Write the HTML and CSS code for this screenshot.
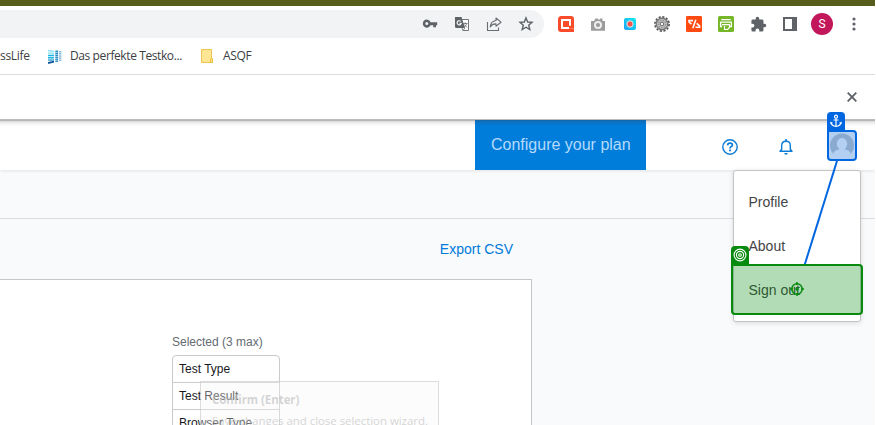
FILE: index.html
```html
<!DOCTYPE html>
<html lang="en">
<head>
<meta charset="utf-8">
<title>Configure your plan</title>
<link rel="stylesheet" href="styles.css">
</head>
<body>
<div class="window">
  <div class="titlebar"></div>
  <div class="toolbar">
    <div class="omnibox">
      <span class="cell"><svg width="16" height="16" viewBox="0 0 16 16"><path fill="#5f6368" fill-rule="evenodd" d="M4.800 3.600a4 4 0 0 1 3.800 2.600H15.200V9.300H14V11.300H11.200V9.300H8.500A4 4 0 1 1 4.800 3.600ZM4.800 6.100a1.500 1.500 0 1 0 0 3 1.500 1.500 0 0 0 0-3Z"/></svg></span>
      <span class="cell"><svg width="16" height="16" viewBox="0 0 16 16"><path d="M6.500 3.500H14.500V14.500H9" fill="#fff" stroke="#73777b"/><path d="M1 1H7.500L11 12H2.500Q1 12 1 10.500Z" fill="#5f6368"/><path d="M6.700 5.300A2.100 2.100 0 1 0 7.300 7.200H5.500" fill="none" stroke="#fff" stroke-width="1.100"/><path d="M9 7.500H13.500M11.300 6.300V7.500M12.800 7.500Q12 10 10 11.300M10.300 8.500L13 11.500M8 12L9 14.500L11 12" fill="none" stroke="#73777b" stroke-width=".9"/></svg></span>
      <span class="cell"><svg width="16" height="16" viewBox="0 0 16 16" fill="none" stroke="#6a6e73" stroke-width="1.100"><path d="M1.500 6V14.500H12.500V11.500"/><path d="M10 2L15 6.200L10 10.200V7.900Q6 7.700 4.200 11Q4.500 5.300 10 4.500Z" stroke-linejoin="round"/></svg></span>
      <span class="cell"><svg width="16" height="16" viewBox="0 0 16 16"><path d="M8 1.900L9.700 6L14 6.300L10.700 9.200L11.800 13.500L8 11.200L4.200 13.500L5.300 9.200L2 6.300L6.300 6Z" fill="none" stroke="#5f6368" stroke-width="1.400"/></svg></span>
    </div>
    <div class="extensions">
      <span class="cell"><svg width="16" height="16" viewBox="0 0 16 16"><path d="M16 14.500H3A1.500 1.500 0 0 1 1.500 13V3A1.500 1.500 0 0 1 3 1.500H13A1.500 1.500 0 0 1 14.500 3V11.200H11" fill="none" stroke="#fa4b2a" stroke-width="3"/><rect x="5" y="5" width="6" height="6" fill="#fa4b2a"/></svg></span>
      <span class="cell"><svg width="16" height="16" viewBox="0 0 16 16"><path d="M1 5H4L5.500 2.500H8V3.500H10V2.500H12.500V5H15V14.800H1Z" fill="#9c9c9c"/><circle cx="8" cy="9" r="3" fill="none" stroke="#eee" stroke-width="2"/><circle cx="8" cy="9" r="1.600" fill="#9c9c9c"/></svg></span>
      <span class="cell"><svg width="14" height="14" viewBox="0 0 14 14"><defs><linearGradient id="cyan" x1="1" y1="0" x2="0" y2="1"><stop stop-color="#11e9ec"/><stop offset="1" stop-color="#1ba3f9"/></linearGradient></defs><rect x="1" y="1" width="12" height="12" rx="2" fill="url(#cyan)"/><circle cx="7" cy="7" r="3.200" fill="#f2554c" stroke="#d6f3f7"/></svg></span>
      <span class="cell"><svg width="16" height="16" viewBox="0 0 16 16"><circle cx="8" cy="8" r="7.100" fill="none" stroke="#505050" stroke-width="1.600" stroke-dasharray="2.200 1.520"/><circle cx="8" cy="8" r="5.800" fill="#c4c4c4" stroke="#777" stroke-width="1.400"/><circle cx="8" cy="8" r="3.700" fill="none" stroke="#929292" stroke-width="1.300" stroke-dasharray="1.500 1"/><circle cx="8" cy="8" r="1.800" fill="#f8f8f8" stroke="#666"/></svg></span>
      <span class="cell"><svg width="16" height="16" viewBox="0 0 16 16"><rect width="16" height="16" rx="1.300" fill="#ff4a12"/><path d="M7 4.600H3V6L5.500 8.200M9.800 3.700L6.800 12.300M10.700 7.300L13.600 9.800V11.300H9.500" fill="none" stroke="#fff" stroke-width="1.600"/></svg></span>
      <span class="cell"><svg width="16" height="16" viewBox="0 0 16 16"><rect width="16" height="16" rx="1.500" fill="#76b729"/><path d="M3.300 3.700H12.700M4 10.500H2.600V6.200H13.400V10.500H12" fill="none" stroke="#fff" stroke-width="1.300"/><path d="M4 8.700H12M11.500 9V11.500L9.500 13.500H6.500V10" fill="none" stroke="#fff" stroke-width="1.200"/></svg></span>
      <span class="cell"><svg width="17" height="17" viewBox="0 0 24 24"><path fill="#5f6368" d="M20.500 11H19V7a2 2 0 0 0-2-2h-4V3.500a2.500 2.500 0 0 0-5 0V5H4a2 2 0 0 0-2 2v3.800h1.500a2.700 2.700 0 0 1 0 5.400H2V20a2 2 0 0 0 2 2h3.800v-1.500a2.700 2.700 0 0 1 5.400 0V22H17a2 2 0 0 0 2-2v-4h1.500a2.500 2.500 0 0 0 0-5Z"/></svg></span>
      <span class="cell"><svg width="14" height="14" viewBox="0 0 14 14"><path d="M1 1H13V13H1Z" fill="#fff" stroke="#5f6368" stroke-width="2"/><path d="M9 0H14V14H9Z" fill="#5f6368"/></svg></span>
      <span class="cell"><span class="profile">S</span></span>
      <span class="cell"><svg width="4" height="14" viewBox="0 0 4 14" fill="#5f6368"><circle cx="2" cy="2" r="1.600"/><circle cx="2" cy="7" r="1.600"/><circle cx="2" cy="12" r="1.600"/></svg></span>
    </div>
  </div>
  <div class="bookmarks">
    <span class="mark-first">ssLife</span>
    <svg class="mark-icon" width="14" height="15" viewBox="0 0 14 15"><g fill="none" stroke-width="1.500"><path d="M0 1.500L6 2.500" stroke="#8fe0f5"/><path d="M0 4L6 4.500" stroke="#9be5f3"/><path d="M0 6.500H6M0 8.700H6" stroke="#1bb4e5"/><path d="M0 11H6" stroke="#42a4cd"/><path d="M0 14L6 12.700" stroke="#13569b" stroke-width="1.800"/></g><path d="M8.700 1.500V13" stroke="#2b8bc6" stroke-width="2.800" stroke-dasharray="1.600 .5"/><path d="M12.200 2V12.500" stroke="#87b9db" stroke-width="2.400" stroke-dasharray="1.500 .6"/></svg>
    <span class="mark-title">Das perfekte Testko...</span>
    <svg class="folder" width="13" height="14" viewBox="0 0 13 14"><path d="M.5.500H10.500V9.500H11.500V13.500H.5Z" fill="#ffe694" stroke="#eac54e"/><path d="M9.500 13.500V10Q10.500 8.500 11.500 10V13.500Z" fill="#ffe694" stroke="#eabf37"/></svg>
    <span class="mark-folder">ASQF</span>
  </div>
  <div class="infobar">
    <svg width="10" height="10" viewBox="0 0 10 10"><path d="M.7.700L9.300 9.300M9.300.700L.7 9.300" stroke="#5f6368" stroke-width="1.900"/></svg>
  </div>
  <main class="page">
    <header class="header">
      <div class="plan">Configure your plan</div>
      <svg class="help" width="16" height="16" viewBox="0 0 16 16"><circle cx="8" cy="8" r="7.200" fill="none" stroke="#0b7bd6" stroke-width="1.400"/><path d="M5.600 6.400Q5.700 4.100 8 4.100Q10.400 4.100 10.400 6.100Q10.400 7.200 9 7.800Q8 8.300 8 9.500" fill="none" stroke="#0b7bd6" stroke-width="1.700"/><rect x="7.100" y="10.500" width="1.800" height="1.800" fill="#0b7bd6"/></svg>
      <svg class="bell" width="14" height="16" viewBox="0 0 14 16"><path d="M1 12.300H13L11.300 10.300V6.500Q11.300 2.300 7 2.300T2.700 6.500V10.300Z" fill="none" stroke="#0b7bd6" stroke-width="1.400" stroke-linejoin="round"/><path d="M7 0V2.300" stroke="#0b7bd6" stroke-width="1.600"/><path d="M5.200 14H8.800Q8.500 15.700 7 15.700T5.200 14Z" fill="#0b7bd6"/></svg>
      <div class="anchor-target">
        <svg width="26" height="27" viewBox="0 0 26 27"><circle cx="13" cy="13.500" r="12" fill="#8aaacf"/><g fill="#b3d0f3"><ellipse cx="13" cy="11.800" rx="5.200" ry="5.800"/><path d="M10 15H16V17.500Q20.500 18 21.500 21V27H4.500V21Q5.500 18 10 17.500Z"/></g></svg>
        <span class="anchor-badge"><svg width="12" height="14" viewBox="0 0 12 14" fill="none" stroke="#fff" stroke-width="1.200"><circle cx="6" cy="2.700" r="1.500"/><path d="M6 4.200V12.300M3.500 6H8.500M.9 10V8.500L2.500 9M11.100 10V8.500L9.500 9M1 8.700Q1.700 12.300 6 12.300T11 8.700"/></svg></span>
      </div>
    </header>
    <div class="subheader"></div>
    <div class="content">
      <div class="actions">Export CSV</div>
      <section class="card">
        <div class="label">Selected (3 max)</div>
        <div class="list"><div>Test Type</div><div>Test Result</div><div>Browser Type</div></div>
      </section>
    </div>
  </main>
  <div class="tooltip"><b>Confirm (Enter)</b><span>Save changes and close selection wizard.</span></div>
  <nav class="menu"><div>Profile</div><div>About</div><div>Sign out</div></nav>
  <svg class="connector" width="40" height="106" viewBox="0 0 40 106"><path d="M35.300 0L2.300 106" stroke="#0067e0" stroke-width="2"/></svg>
  <div class="target">
    <span class="target-badge"><svg width="14" height="14" viewBox="0 0 14 14" fill="none" stroke="#fff" stroke-width="1.100"><circle cx="7" cy="7" r="5.900"/><circle cx="7" cy="7" r="3.600"/><circle cx="7" cy="7" r="1.300"/></svg></span>
    <svg class="cross" width="14" height="14" viewBox="0 0 14 14" fill="none" stroke="#078a0d" stroke-width="1.500"><circle cx="7" cy="7" r="5.200"/><path d="M7 0V3M7 11V14M0 7H3M11 7H14"/><circle cx="7" cy="7" r="1.700" fill="#078a0d" stroke="none"/></svg>
  </div>
</div>
</body>
</html>
```
FILE: styles.css
```css
* { box-sizing: border-box; }
body { margin: 0; overflow: hidden; background: #fff; font-family: "Liberation Sans", Arial, sans-serif; }
svg { display: block; flex: none; }
.window { position: relative; width: 875px; height: 425px; overflow: hidden; display: flex; flex-direction: column; }
.titlebar { height: 6px; flex: none; background: #575d1b; }
.toolbar { height: 36px; flex: none; display: flex; align-items: center; }
.omnibox { width: 544px; height: 28px; padding-right: 2px; background: #f1f3f4; border-radius: 0 14px 14px 0; display: flex; justify-content: flex-end; align-items: center; }
.extensions { display: flex; margin-left: 6px; }
.cell { width: 32px; height: 28px; display: flex; align-items: center; justify-content: center; }
.profile { width: 22px; height: 22px; border-radius: 50%; background: #c2185b; color: #fff; font: 12px/22px Roboto, sans-serif; text-align: center; }
.bookmarks { height: 33px; flex: none; border-bottom: 1px solid #dadce0; display: flex; align-items: center; padding-bottom: 4px; font: 12px/18px "Open Sans", sans-serif; color: #3c4043; white-space: nowrap; }
.mark-first { width: 48px; letter-spacing: -.3px; }
.mark-title { width: 113px; margin-left: 8px; letter-spacing: -.4px; }
.folder { margin-left: 18px; }
.mark-folder { margin-left: 9px; letter-spacing: -.3px; }
.infobar { height: 45px; flex: none; display: flex; align-items: center; justify-content: flex-end; padding-right: 18px; border-bottom: 1px solid #bdbfc0; }
.page { flex: 1; background: #f9fafc; display: flex; flex-direction: column; }
.header { height: 50px; flex: none; display: flex; align-items: flex-start; background: linear-gradient(#969696 0, #d8d8d8 1px, #efefef 3px, #fff 6px); box-shadow: 0 1px 3px #00000018; }
.plan { width: 171px; height: 50px; margin-left: 475px; line-height: 49px; padding-left: 16px; color: #b5dafa; font-size: 16px; background: linear-gradient(#1566a7 0, #0d71c3 2px, #007ddb 6px); }
.help { margin: 19px 0 0 76px; }
.bell { margin: 19px 0 0 41px; }
.anchor-target { position: relative; width: 30px; height: 31px; margin: 10px 0 0 34px; border: 2px solid #0067e0; border-radius: 0 4px 4px 4px; background: #b3d0f3; }
.anchor-badge { position: absolute; left: -2px; top: -20px; width: 18px; height: 19px; padding: 2px 3px; border-radius: 4px 4px 0 0; background: #0067e0; }
.subheader { height: 49px; flex: none; border-bottom: 1px solid #dadce0; }
.content { flex: 1; }
.actions { width: 513px; height: 60px; line-height: 60px; text-align: right; color: #007bdb; font-size: 14px; }
.card { width: 532px; height: 146px; padding: 55px 0 0 172px; border: solid #c4c6c8; border-width: 1px 1px 0 0; background: #fff; }
.label { height: 20px; line-height: 15px; font-size: 12px; color: #656b73; }
.list { width: 108px; border: 1px solid #c8cacc; border-radius: 4px 4px 0 0; font-size: 12px; color: #17191c; }
.list div { height: 27px; line-height: 27px; padding-left: 6px; border-bottom: 1px solid #c8cacc; white-space: nowrap; }
.tooltip { position: absolute; left: 200px; top: 381px; width: 239px; height: 60px; padding: 7px 11px; border: 1px solid #bbbbbb80; background: #f5f5f559; font: 11.500px/21px "Open Sans", sans-serif; color: #bababa99; display: flex; flex-direction: column; white-space: nowrap; }
.tooltip b { letter-spacing: -.06px; }
.tooltip span { letter-spacing: -.05px; }
.menu { position: absolute; left: 733px; top: 170px; width: 128px; height: 152px; padding: 9px 15px; background: #fff; border: 1px solid #c4c4c4; border-radius: 3px; box-shadow: 0 1px 5px #0002; font-size: 14px; color: #444; }
.menu div { height: 44px; line-height: 44px; margin-left: -.5px; }
.connector { position: absolute; left: 802px; top: 160px; }
.target { position: absolute; left: 731px; top: 264px; width: 132px; height: 51px; border: 2px solid #078a0d; border-radius: 0 4px 4px 4px; background: #008a0d4d; }
.target-badge { position: absolute; left: -2px; top: -20px; width: 18px; height: 19px; padding: 2px; border-radius: 4px 4px 0 0; background: #078a0d; }
.cross { position: absolute; left: 57px; top: 16px; }
```
